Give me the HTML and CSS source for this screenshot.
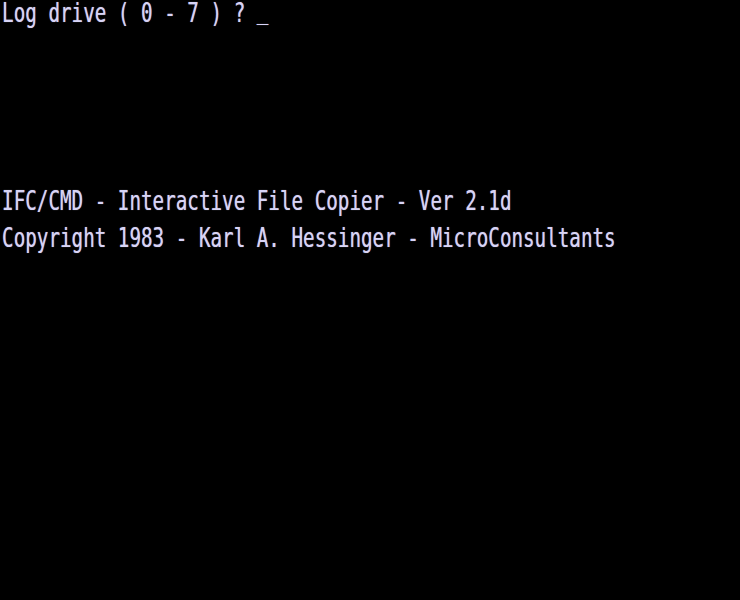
FILE: index.html
```html
<!DOCTYPE html>
<html>
<head>
<meta charset="utf-8">
<link rel="stylesheet" href="styles.css">
</head>
<body>
<div class="screen">
  <div class="line">Log drive ( 0 - 7 ) ? <span class="cursor">_</span></div>
  <div class="line"></div>
  <div class="line"></div>
  <div class="line"></div>
  <div class="line"></div>
  <div class="line">IFC/CMD - Interactive File Copier - Ver 2.1d</div>
  <div class="line">Copyright 1983 - Karl A. Hessinger - MicroConsultants</div>
  <div class="line"></div>
  <div class="line"></div>
  <div class="line"></div>
  <div class="line"></div>
  <div class="line"></div>
  <div class="line"></div>
  <div class="line"></div>
  <div class="line"></div>
  <div class="line"></div>
</div>
</body>
</html>
```
FILE: styles.css
```css
html, body {
  margin: 0;
  padding: 0;
  background: #000;
  width: 740px;
  height: 600px;
  overflow: hidden;
}
.screen {
  width: 740px;
  height: 600px;
  background: #000;
  color: #d8d4f6;
  font-family: "DejaVu Sans Mono", monospace;
  font-size: 27.4px;
}
.line {
  height: 37.5px;
  line-height: 26px;
  white-space: pre;
  padding-left: 3px;
  transform: scaleX(0.702);
  transform-origin: 0 0;
  text-shadow: 0 0 1px rgba(216, 212, 246, 0.7);
}
.cursor {
  display: inline-block;
  transform: translateY(-3px);
}
```
